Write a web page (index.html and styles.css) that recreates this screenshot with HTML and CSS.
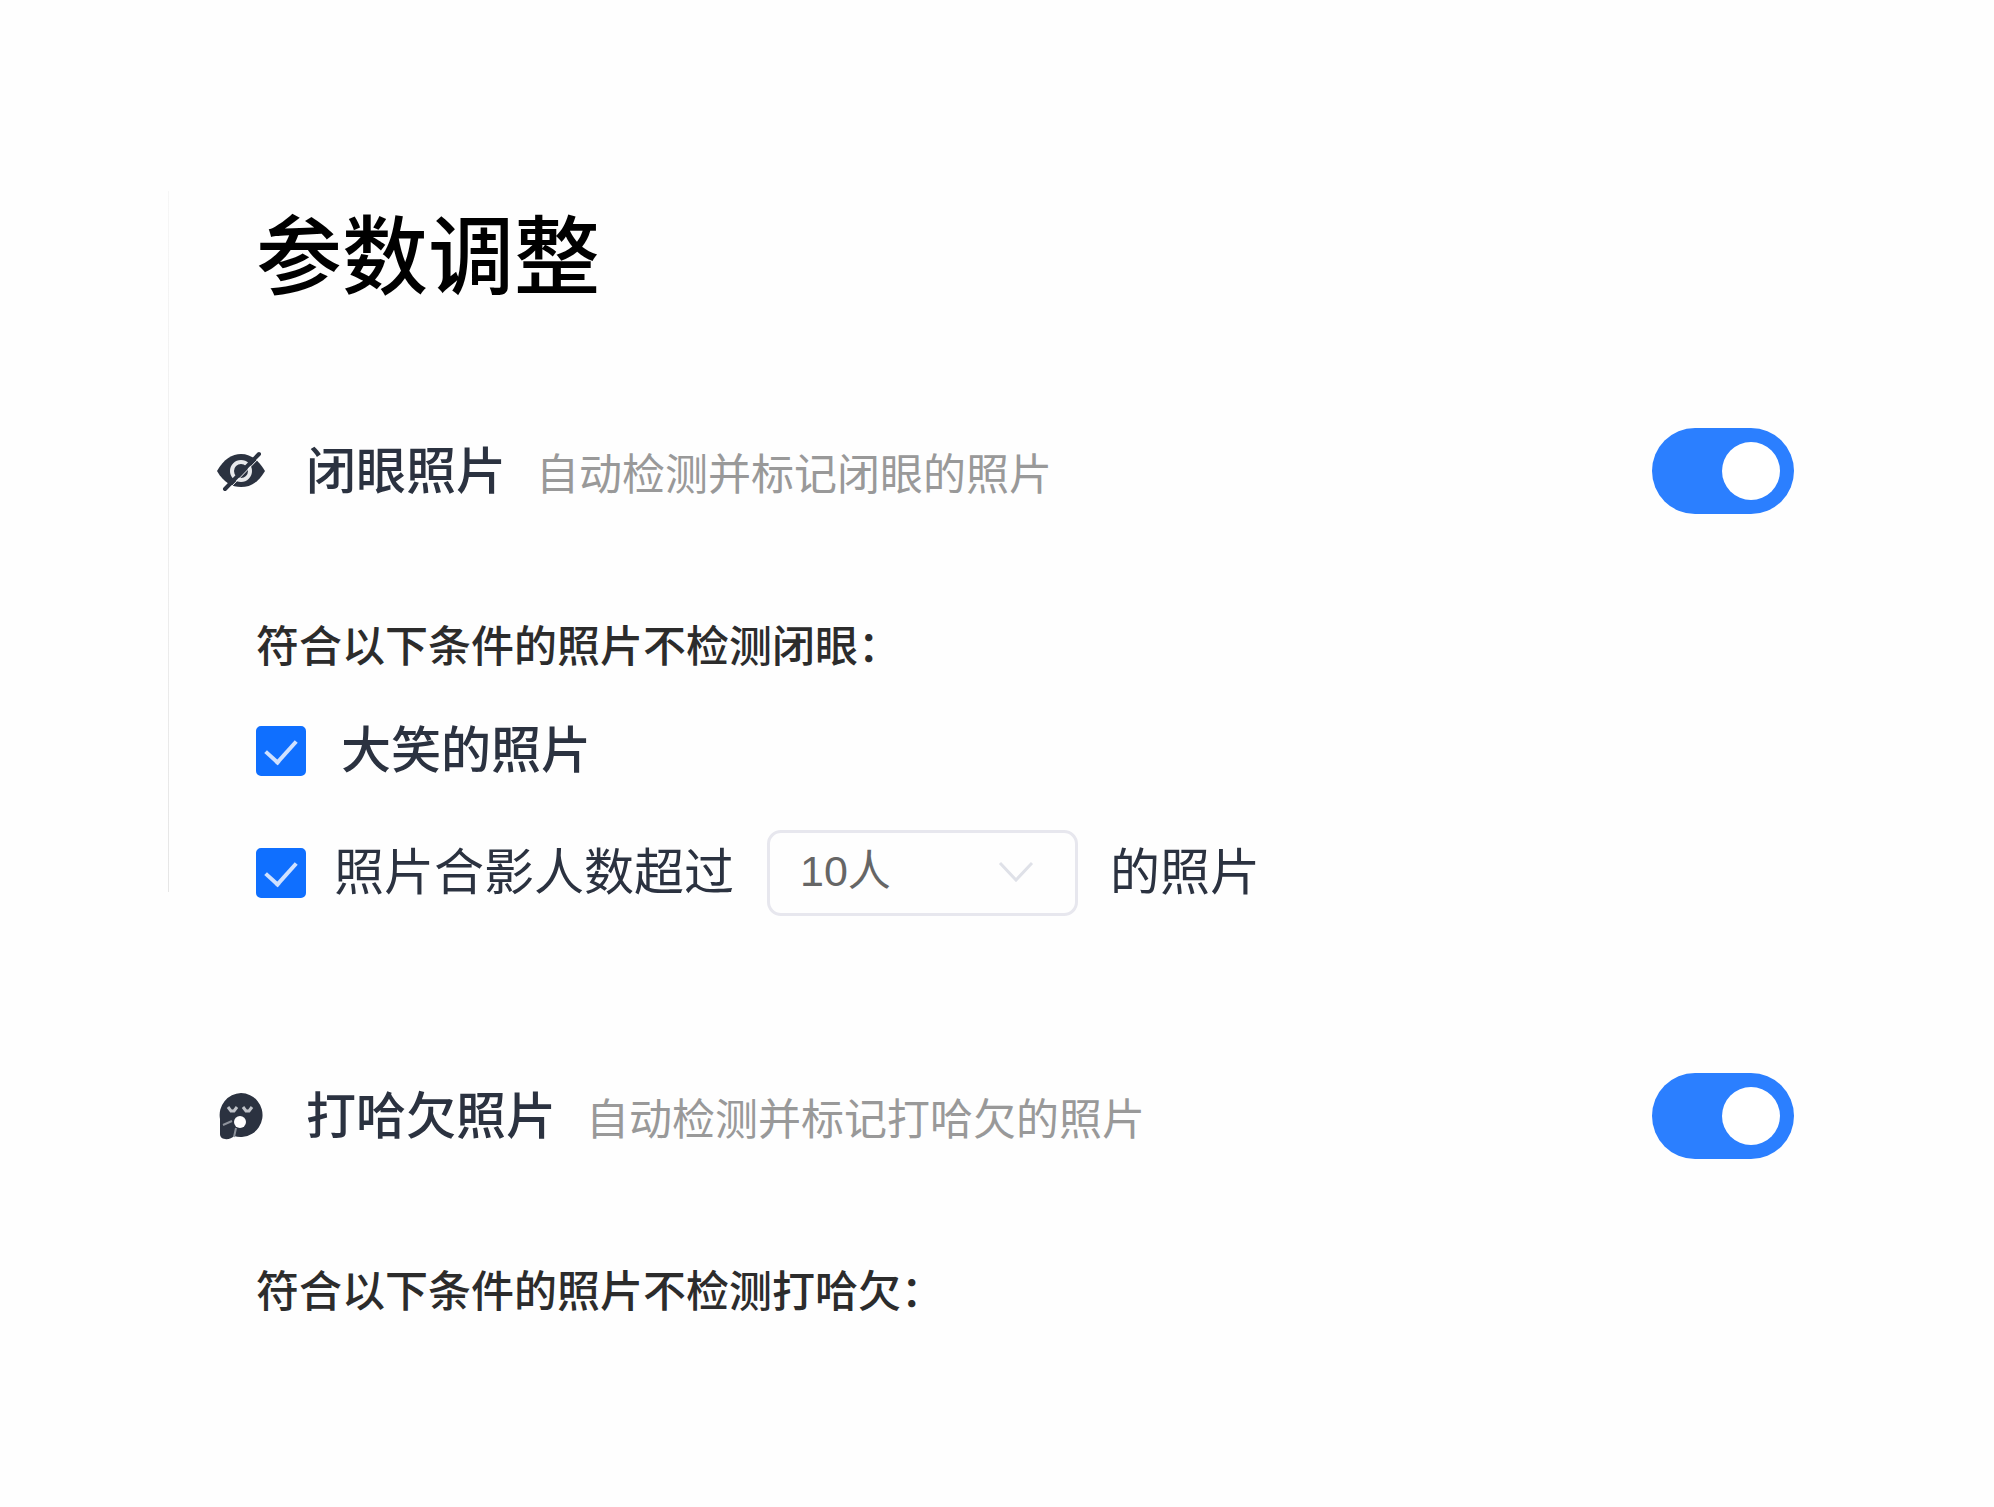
FILE: index.html
```html
<!DOCTYPE html>
<html lang="zh-CN">

<head>
    <meta charset="UTF-8">
    <meta name="viewport" content="width=device-width, initial-scale=1.0">
    <title>参数调整</title>
    <link rel="stylesheet" href="styles.css">
</head>

<body>

    <main class="panel">
        <h1 class="panel-title">参数调整</h1>

        <!-- Closed eyes -->
        <section class="group">
            <div class="group-header">
                <svg class="group-icon" viewBox="0 0 50 50" aria-hidden="true">
                    <path d="M1 25C8 13 16 8 25 8s17 5 24 17C42 37 34 41 25 41S8 37 1 25z" fill="#2b3240" />
                    <circle cx="25" cy="25" r="9" fill="none" stroke="#e8e9eb" stroke-width="4" />
                    <path d="M13 43L46 9" stroke="#fefefe" stroke-width="1" />
                    <path d="M9 43L43 8" stroke="#2b3240" stroke-width="4" stroke-linecap="round" />
                </svg>
                <label class="group-name" for="eyesToggle">闭眼照片</label>
                <span class="group-desc">自动检测并标记闭眼的照片</span>
                <input class="toggle" type="checkbox" id="eyesToggle" checked>
            </div>

            <div class="conditions">
                <p class="conditions-title">符合以下条件的照片不检测闭眼：</p>
                <div class="condition">
                    <input class="checkbox" type="checkbox" id="laugh" checked>
                    <label class="condition-label strong" for="laugh">大笑的照片</label>
                </div>
                <div class="condition">
                    <input class="checkbox" type="checkbox" id="group" checked>
                    <label class="condition-label" for="group">照片合影人数超过</label>
                    <div class="select">
                        <select id="people" aria-label="合影人数">
                            <option>10人</option>
                            <option>20人</option>
                            <option>30人</option>
                        </select>
                        <svg class="select-arrow" viewBox="0 0 36 22" aria-hidden="true">
                            <path d="M2 2L18 19L34 2" fill="none" stroke="#dfe1e8" stroke-width="3" />
                        </svg>
                    </div>
                    <span class="condition-suffix">的照片</span>
                </div>
            </div>
        </section>

        <!-- Yawning -->
        <section class="group">
            <div class="group-header">
                <svg class="group-icon" viewBox="0 0 50 50" aria-hidden="true">
                    <path d="M25 2a22 22 0 1 1-7 43c-3 4-14 5-14-2V28A22 22 0 0 1 25 2z" fill="#2b3240" />
                    <path d="M12 16l3 4h3l3-4M27 16l3 4h3l3-4" fill="none" stroke="#bfc2c8" stroke-width="3" />
                    <circle cx="24" cy="31" r="6" fill="#fefefe" />
                    <path d="M7 34l9-4M18 46l2-9" fill="none" stroke="#8d929b" stroke-width="2" />
                </svg>
                <label class="group-name" for="yawnToggle">打哈欠照片</label>
                <span class="group-desc">自动检测并标记打哈欠的照片</span>
                <input class="toggle" type="checkbox" id="yawnToggle" checked>
            </div>

            <div class="conditions">
                <p class="conditions-title">符合以下条件的照片不检测打哈欠：</p>
            </div>
        </section>
    </main>

</body>

</html>
```

FILE: styles.css
```css
* {
    box-sizing: border-box;
}

body {
    margin: 0;
    background: #fefefe;
    color: #2b3240;
    font-family: "Noto Sans CJK SC", sans-serif;
}

.panel {
    margin: 191px 168px 0;
    padding: 0 32px 160px 47px;
    border-left: 1px solid;
    border-image: linear-gradient(#f6f6f6, #e6e6e6 53%, transparent 53%) 1;
}

.panel-title {
    margin: 0 0 117px 40px;
    font-size: 86px;
    font-weight: 500;
    line-height: 120px;
    color: #000;
}

.group {
    margin-bottom: 157px;
}

.group:last-child {
    margin-bottom: 0;
}

/* Header row */
.group-header {
    display: flex;
    align-items: center;
    height: 86px;
}

.group-icon {
    width: 50px;
    height: 50px;
    margin-right: 40px;
}

.group-name {
    padding-bottom: 8px;
    font-size: 50px;
    font-weight: 500;
    line-height: 64px;
}

.group-desc {
    margin-left: 30px;
    font-size: 43px;
    line-height: 64px;
    color: #999;
}

/* Toggle switch */
.toggle {
    appearance: none;
    width: 142px;
    height: 86px;
    margin: 0 0 0 auto;
    padding: 14px;
    border-radius: 43px;
    background: #ccc;
    display: flex;
    align-items: center;
    cursor: pointer;
}

.toggle::after {
    content: "";
    width: 58px;
    height: 58px;
    border-radius: 50%;
    background: #fff;
}

.toggle:checked {
    background: #2b7fff;
    justify-content: flex-end;
}

/* Conditions */
.conditions {
    margin: 97px 0 0 40px;
}

.conditions-title {
    margin: 0 0 33px;
    font-size: 43px;
    font-weight: 500;
    line-height: 64px;
    color: #2c2c2c;
}

.condition {
    display: flex;
    align-items: center;
    height: 86px;
    margin-bottom: 36px;
}

.condition:last-child {
    margin-bottom: 0;
}

.checkbox {
    appearance: none;
    flex: none;
    width: 50px;
    height: 50px;
    margin: 0;
    border: 2px solid #0f6fff;
    border-radius: 5px;
    display: grid;
    place-items: center;
    cursor: pointer;
}

.checkbox:checked {
    background: #0f6fff;
}

.checkbox:checked::after {
    content: "";
    width: 14px;
    height: 26px;
    margin-bottom: 6px;
    border: solid #cfe1ff;
    border-width: 0 4px 4px 0;
    transform: rotate(42deg);
}

.condition-label,
.condition-suffix {
    padding-bottom: 10px;
    font-size: 50px;
    line-height: 64px;
}

.condition-label {
    margin-left: 28px;
}

.condition-label.strong {
    margin-left: 35px;
    font-weight: 500;
}

/* Dropdown */
.select {
    position: relative;
    margin: 0 32px 0 33px;
}

.select select {
    appearance: none;
    display: block;
    width: 311px;
    height: 86px;
    padding: 0 30px 4px;
    border: 3px solid #e7e7ee;
    border-radius: 14px;
    background: transparent;
    color: #666;
    font-family: "Liberation Sans", "Noto Sans CJK SC", sans-serif;
    font-size: 43px;
}

.select-arrow {
    position: absolute;
    top: 31px;
    right: 44px;
    width: 36px;
    height: 22px;
    pointer-events: none;
}
```
